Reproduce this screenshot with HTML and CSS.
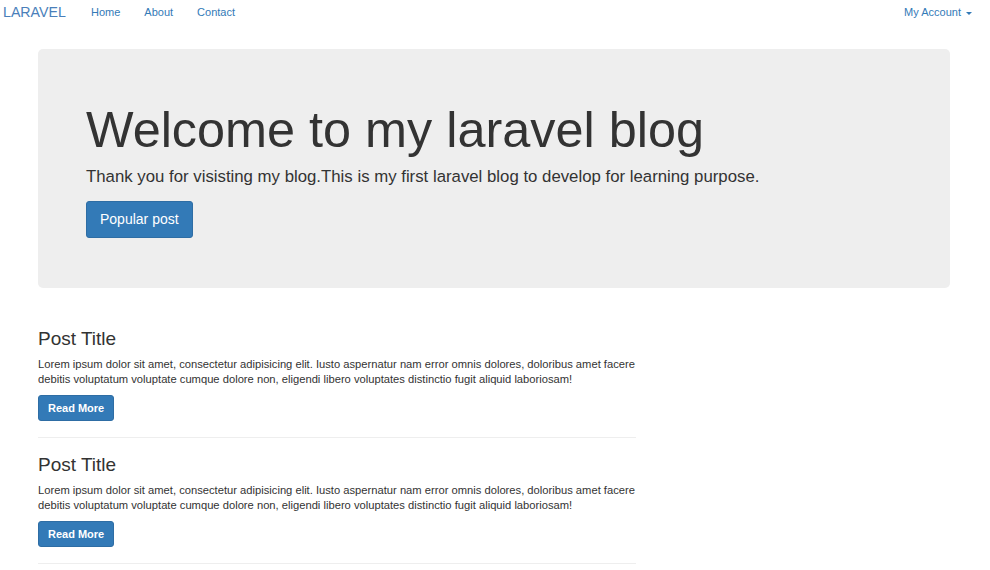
FILE: index.html
```html
<!DOCTYPE html>
<html>
<head>
<meta charset="utf-8">
<link rel="stylesheet" href="styles.css">
</head>
<body>
<nav class="navbar">
  <a class="brand" href="#">LARAVEL</a>
  <ul class="nav-links">
    <li><a href="#">Home</a></li>
    <li><a href="#">About</a></li>
    <li><a href="#">Contact</a></li>
  </ul>
  <div class="nav-right"><a href="#">My Account <span class="caret"></span></a></div>
</nav>
<div class="container">
  <div class="jumbotron">
    <h1>Welcome to my laravel blog</h1>
    <p>Thank you for visisting my blog.This is my first laravel blog to develop for learning purpose.</p>
    <a class="btn btn-lg" href="#">Popular post</a>
  </div>
  <div class="posts">
    <div class="post">
      <h3>Post Title</h3>
      <p>Lorem ipsum dolor sit amet, consectetur adipisicing elit. Iusto aspernatur nam error omnis dolores, doloribus amet facere debitis voluptatum voluptate cumque dolore non, eligendi libero voluptates distinctio fugit aliquid laboriosam!</p>
      <a class="btn btn-sm" href="#">Read More</a>
    </div>
    <hr>
    <div class="post">
      <h3>Post Title</h3>
      <p>Lorem ipsum dolor sit amet, consectetur adipisicing elit. Iusto aspernatur nam error omnis dolores, doloribus amet facere debitis voluptatum voluptate cumque dolore non, eligendi libero voluptates distinctio fugit aliquid laboriosam!</p>
      <a class="btn btn-sm" href="#">Read More</a>
    </div>
    <hr>
  </div>
</div>
</body>
</html>
```
FILE: styles.css
```css
* { box-sizing: border-box; }
body {
  margin: 0;
  font-family: "Liberation Sans", Arial, sans-serif;
  font-size: 11px;
  line-height: 15px;
  color: #333;
  background: #fff;
}
a { text-decoration: none; color: #337ab7; }
.navbar {
  display: flex;
  align-items: center;
  height: 25px;
}
.brand {
  font-size: 14.2px;
  padding-left: 3px;
  width: 91px;
  color: #4a7fba;
}
.nav-links {
  display: flex;
  list-style: none;
  margin: 0;
  padding: 0;
  gap: 24px;
}
.nav-links a { font-size: 11px; }
.nav-right { margin-left: auto; padding-right: 18px; }
.nav-right a { font-size: 11px; }
.caret {
  display: inline-block;
  width: 0;
  height: 0;
  margin-left: 2px;
  vertical-align: middle;
  border-top: 3px solid #337ab7;
  border-left: 3px solid transparent;
  border-right: 3px solid transparent;
}
.container {
  padding: 24px 40px 0 38px;
}
.jumbotron {
  background: #eee;
  border-radius: 5px;
  padding: 48px 48px 50px;
  height: 239px;
}
.jumbotron h1 {
  margin: 0;
  font-size: 50.4px;
  font-weight: 400;
  line-height: 62px;
  padding-top: 2px;
}
.jumbotron p {
  margin: 4px 0 12px;
  font-size: 16.8px;
  line-height: 24px;
}
.btn {
  display: inline-block;
  background: #337ab7;
  border: 1px solid #2e6da4;
  color: #fff;
  border-radius: 3px;
}
.btn-lg {
  font-size: 14px;
  padding: 0 13px;
  height: 37px;
  line-height: 35px;
}
.btn-sm {
  font-size: 11px;
  font-weight: bold;
  padding: 0 9px;
  height: 26px;
  line-height: 24px;
}
.posts {
  width: 598px;
  padding-top: 38px;
}
.post h3 {
  margin: 0 0 5px;
  font-size: 19px;
  font-weight: 400;
  line-height: 26px;
}
.post p { margin: 0 0 8px; font-size: 11.2px; }
hr {
  margin: 16px 0 14px;
  border: 0;
  border-top: 1px solid #eee;
}
```
